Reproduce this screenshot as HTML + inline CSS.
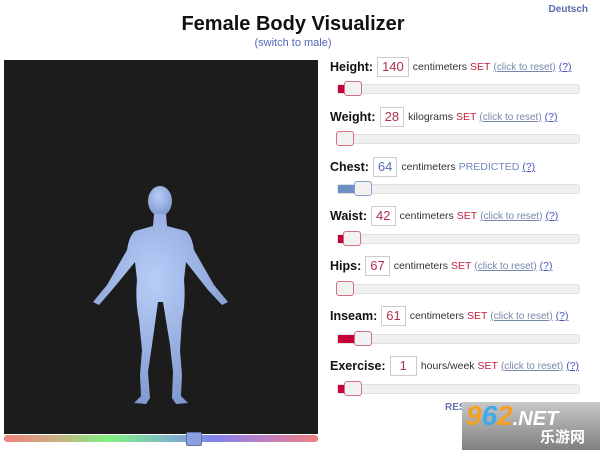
<!DOCTYPE html><html><head><meta charset="utf-8"><style>
body{margin:0;width:600px;height:450px;overflow:hidden;background:#fff;font-family:"Liberation Sans",Arial,sans-serif;position:relative}
.a{position:absolute}
h1{position:absolute;left:0;width:586px;text-align:center;top:13px;margin:0;font-size:20px;font-weight:bold;color:#111}
.sw{left:0;width:586px;text-align:center;top:37px;font-size:11px;color:#5566bb}
.de{right:12px;top:4px;font-size:10px;font-weight:bold;color:#5b6aa8}
.row{position:absolute;left:330px;font-size:10.5px;color:#333;white-space:nowrap;display:flex;align-items:center}
.row b{font-size:12.5px;color:#111;margin-right:4px}
.box{border:1px solid #ccc;height:18px;padding:0 4px;line-height:18px;font-size:13px;color:#b03050;margin-right:4px}
.set{color:#c0203a;margin:0 3px}
.lk{color:#7788aa;text-decoration:underline;margin-right:3px;font-size:10px}
.q{color:#4a55bb;text-decoration:underline}
.tr{position:absolute;left:337px;width:241px;height:8px;background:#f0f0f0;border:1px solid #e0e0e0;border-radius:3px}
.fill{position:absolute;left:0;top:0;height:8px;background:#c8003a}
.th{position:absolute;top:-4px;width:16px;height:13px;background:#f2f2f2;border:1px solid #d47080;border-radius:3px}
</style></head><body>
<h1>Female Body Visualizer</h1>
<div class="a sw">(switch to male)</div>
<div class="a de">Deutsch</div>
<div class="a" style="left:4px;top:60px;width:314px;height:374px;background:#1c1c1c"></div>
<div class="a" style="left:4px;top:435px;width:314px;height:7px;border-radius:3px;background:linear-gradient(90deg,#f08080,#c8b080,#80f080,#80c0c0,#8080f0,#c080c0,#f08080)"></div>
<div class="a" style="left:186px;top:432px;width:14px;height:12px;background:#8aa0e0;border:1px solid #6070a0;border-radius:2px"></div>
<svg class="a" style="left:0;top:0" width="330" height="450"><defs><radialGradient id="g" cx="45%" cy="35%" r="70%"><stop offset="0" stop-color="#b8cdf8"/><stop offset="1" stop-color="#7d96cc"/></radialGradient></defs>
<g fill="url(#g)">
<ellipse cx="160" cy="201" rx="12" ry="15"/>
<path d="M154 214 L166 214 L167 226 L186 231 Q192 236 194 250 L214 285 L228 302 L222 305 L208 290 L186 262 L184 280 Q186 300 182 320 L180 350 L182 375 L181 396 L188 403 L176 404 L172 398 L173 372 L170 345 L163 302 L158 302 L152 345 L148 372 L150 398 L146 404 L134 403 L141 396 L140 375 L142 350 L139 320 Q135 300 137 280 L135 262 L112 290 L99 305 L93 302 L107 285 L127 250 Q129 236 135 231 L153 226 Z"/>
</g></svg>
<div class="row" style="top:57px"><b>Height:</b><span class="box">140</span>centimeters<span class="set">SET</span><span class="lk">(click to reset)</span><span class="q">(?)</span></div>
<div class="tr" style="top:84px"><div class="fill" style="width:10px"></div><div class="th" style="left:6px"></div></div>
<div class="row" style="top:107px"><b>Weight:</b><span class="box">28</span>kilograms<span class="set">SET</span><span class="lk">(click to reset)</span><span class="q">(?)</span></div>
<div class="tr" style="top:134px"><div class="th" style="left:-2px"></div></div>
<div class="row" style="top:157px"><b>Chest:</b><span class="box" style="color:#5570b0">64</span>centimeters<span class="set" style="color:#7088c0">PREDICTED</span><span class="q">(?)</span></div>
<div class="tr" style="top:184px"><div class="fill" style="width:20px;background:#6a90c8"></div><div class="th" style="left:16px;border-color:#8aa0c8"></div></div>
<div class="row" style="top:206px"><b>Waist:</b><span class="box">42</span>centimeters<span class="set">SET</span><span class="lk">(click to reset)</span><span class="q">(?)</span></div>
<div class="tr" style="top:234px"><div class="fill" style="width:10px"></div><div class="th" style="left:5px"></div></div>
<div class="row" style="top:256px"><b>Hips:</b><span class="box">67</span>centimeters<span class="set">SET</span><span class="lk">(click to reset)</span><span class="q">(?)</span></div>
<div class="tr" style="top:284px"><div class="th" style="left:-2px"></div></div>
<div class="row" style="top:306px"><b>Inseam:</b><span class="box">61</span>centimeters<span class="set">SET</span><span class="lk">(click to reset)</span><span class="q">(?)</span></div>
<div class="tr" style="top:334px"><div class="fill" style="width:20px"></div><div class="th" style="left:16px"></div></div>
<div class="row" style="top:356px"><b>Exercise:</b><span class="box" style="padding:0 9px">1</span>hours/week<span class="set">SET</span><span class="lk">(click to reset)</span><span class="q">(?)</span></div>
<div class="tr" style="top:384px"><div class="fill" style="width:10px"></div><div class="th" style="left:6px"></div></div>
<div class="a" style="left:445px;top:402px;font-size:10px;font-weight:bold;color:#6677aa">RESET MEASUREMENTS</div>
<div class="a" style="left:462px;top:402px;width:138px;height:48px;background:linear-gradient(#c8c8c8,#808080)"></div>
<div class="a" style="left:466px;top:400px;font-size:28px;font-weight:bold;font-style:italic;color:#f5a020">9<span style="color:#40a8e8">6</span>2<span style="color:#fff;font-size:20px">.NET</span></div>
<div class="a" style="left:540px;top:426px;font-size:15px;font-weight:bold;color:#fff;font-family:'Noto Sans CJK SC',sans-serif">乐游网</div>
</body></html>
